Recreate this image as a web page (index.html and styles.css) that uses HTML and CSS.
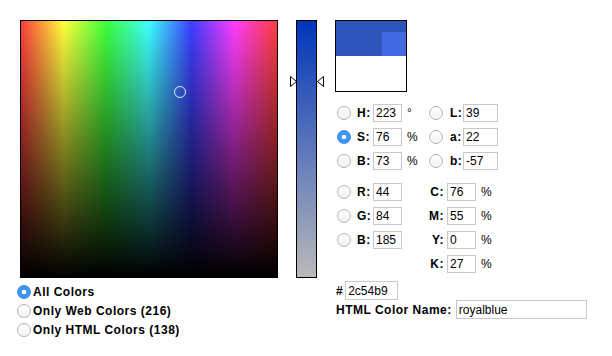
FILE: index.html
```html
<!DOCTYPE html>
<html>
<head>
  <meta charset="UTF-8">
  <title>Color Picker</title>
  <link rel="stylesheet" href="styles.css">
</head>
<body>

<div class="picker">
  <div class="left">
    <div class="field">
      <div class="marker"></div>
    </div>
    <div class="modes">
      <label class="mode"><span class="radio on"></span>All Colors</label>
      <label class="mode"><span class="radio"></span>Only Web Colors (216)</label>
      <label class="mode"><span class="radio"></span>Only HTML Colors (138)</label>
    </div>
  </div>

  <div class="slider">
    <div class="bar"></div>
    <svg class="arrow arrow-l" width="7" height="11" viewBox="0 0 7 11"><path d="M0.5 0.5 L6.5 5.5 L0.5 10.5 Z" fill="#fff" stroke="#000"/></svg>
    <svg class="arrow arrow-r" width="7" height="11" viewBox="0 0 7 11"><path d="M6.5 0.5 L0.5 5.5 L6.5 10.5 Z" fill="#fff" stroke="#000"/></svg>
  </div>

  <div class="right">
    <div class="swatch">
      <div class="swatch-new"><div class="swatch-named"></div></div>
      <div class="swatch-old"></div>
    </div>

    <div class="grid hsb">
      <span class="radio"></span><b>H:</b><input value="223"><span class="unit">°</span>
      <span class="radio"></span><b>L:</b><input class="wide" value="39">
      <span class="radio on"></span><b>S:</b><input value="76"><span class="unit">%</span>
      <span class="radio"></span><b>a:</b><input class="wide" value="22">
      <span class="radio"></span><b>B:</b><input value="73"><span class="unit">%</span>
      <span class="radio"></span><b>b:</b><input class="wide" value="-57">
    </div>

    <div class="grid rgb">
      <span class="radio"></span><b>R:</b><input value="44"><b class="rl">C:</b><input value="76"><span class="unit">%</span>
      <span class="radio"></span><b>G:</b><input value="84"><b class="rl">M:</b><input value="55"><span class="unit">%</span>
      <span class="radio"></span><b>B:</b><input value="185"><b class="rl">Y:</b><input value="0"><span class="unit">%</span>
      <span></span><span></span><span></span><b class="rl">K:</b><input value="27"><span class="unit">%</span>
    </div>

    <div class="hex"><b>#</b><input value="2c54b9"></div>
    <div class="name"><b>HTML Color Name:</b><input value="royalblue"></div>
  </div>
</div>

</body>
</html>
```

FILE: styles.css
```css
body {
  margin: 0;
  background: #fff;
  color: #000;
  font-family: "Liberation Sans", Arial, sans-serif;
  font-size: 12px;
}
b {
  font-weight: bold;
  letter-spacing: 0.5px;
}
input {
  box-sizing: border-box;
  height: 18px;
  width: 29px;
  margin: 0;
  padding: 0 2px;
  border: 1px solid #c8c8c8;
  font-family: "Liberation Sans", Arial, sans-serif;
  font-size: 12px;
  color: #000;
  outline: none;
}
.picker {
  display: flex;
  align-items: flex-start;
  padding: 20px 0 0 17px;
}
.field {
  position: relative;
  width: 256px;
  height: 256px;
  margin-left: 3px;
  border: 1px solid #000;
  background:
    linear-gradient(to bottom, rgba(0,0,0,0), #000),
    linear-gradient(to right, #ff3d3d, #ffff3d 16.67%, #3dff3d 33.33%, #3dffff 50%, #3d3dff 66.67%, #ff3dff 83.33%, #ff3d3d);
}
.marker {
  position: absolute;
  left: 153px;
  top: 65px;
  width: 10px;
  height: 10px;
  border: 1px solid rgba(255,255,255,0.85);
  border-radius: 50%;
}
.modes {
  margin-top: 4px;
}
.mode {
  display: flex;
  align-items: center;
  gap: 2px;
  height: 19px;
  font-weight: bold;
  letter-spacing: 0.5px;
}
.radio {
  box-sizing: border-box;
  display: inline-block;
  width: 14px;
  height: 14px;
  border: 1px solid #b4b4b4;
  border-radius: 50%;
  background: linear-gradient(#fff, #f2f2f2);
}
.radio.on {
  border-color: #3a8ef0;
  background: radial-gradient(circle, #fff 0 2px, #3d95f7 2.5px);
}
.slider {
  position: relative;
  margin-left: 12px;
  padding: 0 6px;
}
.bar {
  width: 19px;
  height: 256px;
  border: 1px solid #000;
  background: linear-gradient(to bottom, #0035ba, #b9b9b9);
}
.arrow {
  position: absolute;
  top: 56px;
}
.arrow-l { left: 0; }
.arrow-r { right: -1px; }
.right {
  margin-left: 12px;
}
.swatch {
  width: 70px;
  height: 70px;
  border: 1px solid #000;
}
.swatch-new {
  display: flex;
  justify-content: flex-end;
  align-items: flex-end;
  height: 35px;
  background: #2c54b9;
}
.swatch-named {
  width: 24px;
  height: 24px;
  background: #4169e1;
}
.swatch-old {
  height: 35px;
  background: #fff;
}
.grid {
  display: grid;
  align-items: center;
  grid-auto-rows: 18px;
  row-gap: 6px;
}
.grid .radio {
  margin-left: 2px;
}
.hsb {
  margin-top: 12px;
  grid-template-columns: 22px 16px 29px 25px 23px 13px 35px;
}
.hsb input.wide {
  width: 35px;
}
.unit {
  padding-left: 5px;
}
.rgb {
  margin-top: 13px;
  grid-template-columns: 22px 16px 29px 45px 29px 20px;
}
.rl {
  text-align: right;
  padding-right: 3px;
}
.hex {
  display: flex;
  align-items: center;
  gap: 2px;
  margin-top: 8px;
  padding-left: 1px;
}
.hex input {
  width: 53px;
  height: 19px;
}
.name {
  display: flex;
  align-items: center;
  gap: 4px;
  padding-left: 1px;
}
.name input {
  width: 131px;
  height: 19px;
}
```
